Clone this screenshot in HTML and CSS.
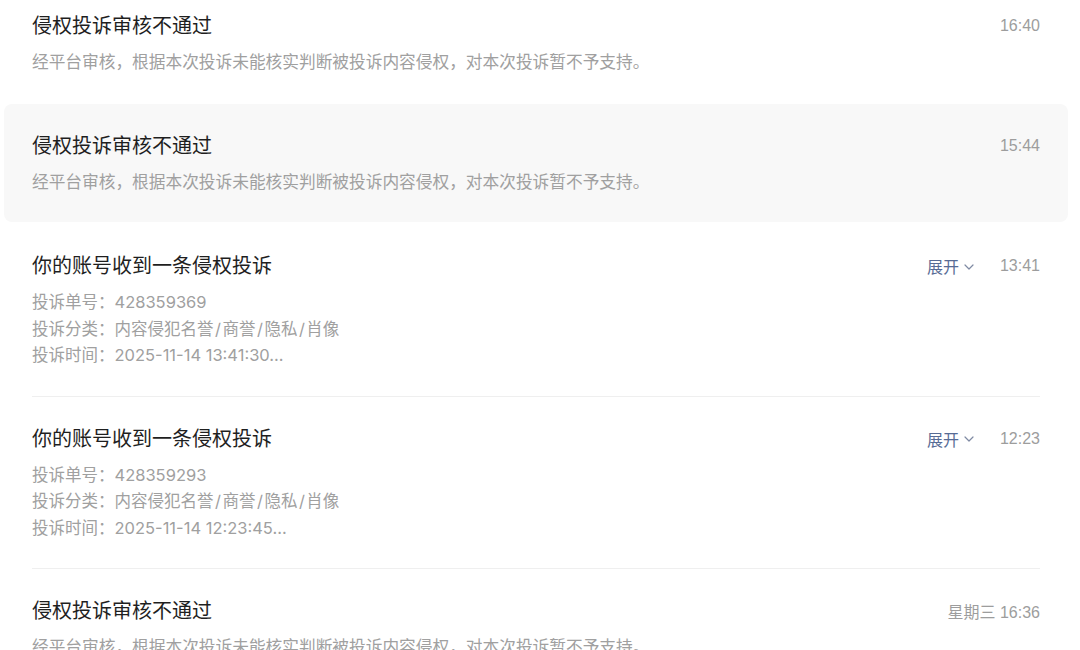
FILE: index.html
```html
<!DOCTYPE html>
<html lang="zh-CN">
<head>
<meta charset="utf-8">
<title>通知</title>
<link rel="stylesheet" href="styles.css">
</head>
<body>
<div class="list">
  <div class="item">
    <div class="head">
      <div class="title">侵权投诉审核不通过</div>
      <div class="meta"><span class="time">16:40</span></div>
    </div>
    <div class="desc">经平台审核，根据本次投诉未能核实判断被投诉内容侵权，对本次投诉暂不予支持。</div>
  </div>
  <div class="item active">
    <div class="head">
      <div class="title">侵权投诉审核不通过</div>
      <div class="meta"><span class="time">15:44</span></div>
    </div>
    <div class="desc">经平台审核，根据本次投诉未能核实判断被投诉内容侵权，对本次投诉暂不予支持。</div>
  </div>
  <div class="item detail">
    <div class="head">
      <div class="title">你的账号收到一条侵权投诉</div>
      <div class="meta">
        <span class="expand">展开<svg class="chev" viewBox="0 0 10 6" width="10" height="6"><path d="M1 1l4 4 4-4" fill="none" stroke="currentColor" stroke-width="1.2" stroke-linecap="round" stroke-linejoin="round"/></svg></span>
        <span class="time">13:41</span>
      </div>
    </div>
    <div class="lines">
      <div class="line">投诉单号：428359369</div>
      <div class="line">投诉分类：内容侵犯名誉<span class="sl">/</span>商誉<span class="sl">/</span>隐私<span class="sl">/</span>肖像</div>
      <div class="line">投诉时间：2025-11-14 13:41:30...</div>
    </div>
  </div>
  <div class="item detail">
    <div class="head">
      <div class="title">你的账号收到一条侵权投诉</div>
      <div class="meta">
        <span class="expand">展开<svg class="chev" viewBox="0 0 10 6" width="10" height="6"><path d="M1 1l4 4 4-4" fill="none" stroke="currentColor" stroke-width="1.2" stroke-linecap="round" stroke-linejoin="round"/></svg></span>
        <span class="time">12:23</span>
      </div>
    </div>
    <div class="lines">
      <div class="line">投诉单号：428359293</div>
      <div class="line">投诉分类：内容侵犯名誉<span class="sl">/</span>商誉<span class="sl">/</span>隐私<span class="sl">/</span>肖像</div>
      <div class="line">投诉时间：2025-11-14 12:23:45...</div>
    </div>
  </div>
  <div class="item">
    <div class="head">
      <div class="title">侵权投诉审核不通过</div>
      <div class="meta"><span class="time">星期三 16:36</span></div>
    </div>
    <div class="desc">经平台审核，根据本次投诉未能核实判断被投诉内容侵权，对本次投诉暂不予支持。</div>
  </div>
</div>
</body>
</html>
```

FILE: styles.css
```css
html, body {
  margin: 0;
  padding: 0;
  background: #ffffff;
  height: 650px;
  overflow: hidden;
}
body {
  font-family: "Liberation Sans", "Noto Sans CJK SC", sans-serif;
  color: #1f1f1f;
}
.list {
  margin-top: -16px;
  padding: 0 12px 0 4px;
  display: flex;
  flex-direction: column;
  gap: 2px;
}
.item {
  padding: 28px 28px 26px;
  border-radius: 8px;
}
.item.active {
  background: #f8f8f8;
}
.head {
  display: flex;
  align-items: center;
  justify-content: space-between;
  height: 28px;
}
.title {
  font-size: 20px;
  line-height: 28px;
  color: #1f1f1f;
}
.meta {
  display: flex;
  align-items: center;
  gap: 26px;
}
.time {
  font-size: 16px;
  color: #9d9d9d;
}
.expand {
  display: flex;
  align-items: center;
  gap: 5px;
  font-size: 16px;
  color: #576b95;
}
.chev {
  color: #7f8aa3;
  margin-top: 1px;
}
.desc {
  margin-top: 10px;
  font-size: 16.7px;
  line-height: 26px;
  color: #a0a0a0;
  white-space: nowrap;
}
.item.detail {
  padding: 0 28px;
}
.item.detail .head {
  margin-top: 28px;
}
.item.detail + .item.detail .head {
  margin-top: 26px;
}
.item.detail + .item:not(.detail) {
  padding-top: 26px;
}
.lines {
  margin-top: 9px;
  padding-bottom: 27px;
  border-bottom: 1px solid #efefef;
}
.line {
  font-family: "Inter", "Noto Sans CJK SC", sans-serif;
  font-size: 16.5px;
  line-height: 26.5px;
  color: #a0a0a0;
}
.sl {
  padding: 0 1.5px;
}
```
